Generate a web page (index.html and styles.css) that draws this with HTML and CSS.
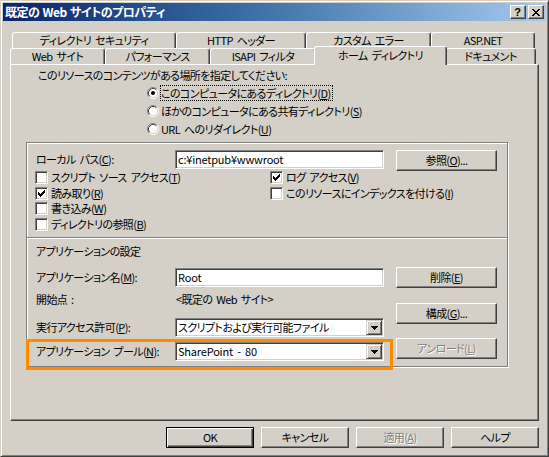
FILE: index.html
```html
<!DOCTYPE html>
<html lang="ja">
<head>
<meta charset="utf-8">
<title>既定の Web サイトのプロパティ</title>
<link rel="stylesheet" href="styles.css">
</head>
<body>
<div class="window">
  <div class="titlebar">
    <span class="title">既定の Web サイトのプロパティ</span>
    <div class="tbtns">
      <span class="tbtn help">?</span>
      <span class="tbtn close"><svg width="8" height="7" viewBox="0 0 8 7" shape-rendering="crispEdges"><path d="M0 0h2v1h-2z M6 0h2v1h-2z M1 1h2v1h-2z M5 1h2v1h-2z M2 2h4v1h-4z M3 3h2v1h-2z M2 4h4v1h-4z M1 5h2v1h-2z M5 5h2v1h-2z M0 6h2v1h-2z M6 6h2v1h-2z" fill="#000"/></svg></span>
    </div>
  </div>

  <div class="tabs">
    <div class="tabrow back">
      <div class="tab t-sec">ディレクトリ セキュリティ</div>
      <div class="tab t-http">HTTP ヘッダー</div>
      <div class="tab t-err">カスタム エラー</div>
      <div class="tab t-asp">ASP.NET</div>
    </div>
    <div class="tabrow front">
      <div class="tab t-web">Web サイト</div>
      <div class="tab t-perf">パフォーマンス</div>
      <div class="tab t-isapi">ISAPI フィルタ</div>
      <div class="tab t-home sel">ホーム ディレクトリ</div>
      <div class="tab t-doc">ドキュメント</div>
    </div>
  </div>

  <div class="panel">
    <div class="prompt">このリソースのコンテンツがある場所を指定してください:</div>
    <div class="radios">
      <div class="radio">
        <svg class="rb" width="12" height="12" viewBox="0 0 12 12"><circle cx="6" cy="6" r="5" fill="#fff"/><path d="M2.11 9.89A5.5 5.5 0 0 1 9.89 2.11" fill="none" stroke="#808080"/><path d="M9.89 2.11A5.5 5.5 0 0 1 2.11 9.89" fill="none" stroke="#fff"/><path d="M2.82 9.18A4.5 4.5 0 0 1 9.18 2.82" fill="none" stroke="#404040"/><path d="M9.18 2.82A4.5 4.5 0 0 1 2.82 9.18" fill="none" stroke="#d4d0c8"/><circle cx="6" cy="6" r="2" fill="#000"/></svg>
        <span class="rl focus">このコンピュータにあるディレクトリ(<u>D</u>)</span>
      </div>
      <div class="radio">
        <svg class="rb" width="12" height="12" viewBox="0 0 12 12"><circle cx="6" cy="6" r="5" fill="#fff"/><path d="M2.11 9.89A5.5 5.5 0 0 1 9.89 2.11" fill="none" stroke="#808080"/><path d="M9.89 2.11A5.5 5.5 0 0 1 2.11 9.89" fill="none" stroke="#fff"/><path d="M2.82 9.18A4.5 4.5 0 0 1 9.18 2.82" fill="none" stroke="#404040"/><path d="M9.18 2.82A4.5 4.5 0 0 1 2.82 9.18" fill="none" stroke="#d4d0c8"/></svg>
        <span class="rl">ほかのコンピュータにある共有ディレクトリ(<u>S</u>)</span>
      </div>
      <div class="radio">
        <svg class="rb" width="12" height="12" viewBox="0 0 12 12"><circle cx="6" cy="6" r="5" fill="#fff"/><path d="M2.11 9.89A5.5 5.5 0 0 1 9.89 2.11" fill="none" stroke="#808080"/><path d="M9.89 2.11A5.5 5.5 0 0 1 2.11 9.89" fill="none" stroke="#fff"/><path d="M2.82 9.18A4.5 4.5 0 0 1 9.18 2.82" fill="none" stroke="#404040"/><path d="M9.18 2.82A4.5 4.5 0 0 1 2.82 9.18" fill="none" stroke="#d4d0c8"/></svg>
        <span class="rl">URL へのリダイレクト(<u>U</u>)</span>
      </div>
    </div>

    <div class="group">
      <div class="row path">
        <span class="lbl">ローカル パス(<u>C</u>):</span>
        <div class="field">c:¥inetpub¥wwwroot</div>
        <div class="btn">参照(<u>O</u>)...</div>
      </div>

      <div class="checks">
        <div class="ccol first">
          <div class="check"><span class="cb"></span><span>スクリプト ソース アクセス(<u>T</u>)</span></div>
          <div class="check"><span class="cb"><svg width="13" height="13" viewBox="0 0 13 13" shape-rendering="crispEdges"><path d="M3 5h1v3h-1z M4 6h1v3h-1z M5 7h1v3h-1z M6 6h1v3h-1z M7 5h1v3h-1z M8 4h1v3h-1z M9 3h1v3h-1z" fill="#000"/></svg></span><span>読み取り(<u>R</u>)</span></div>
          <div class="check"><span class="cb"></span><span>書き込み(<u>W</u>)</span></div>
          <div class="check"><span class="cb"></span><span>ディレクトリの参照(<u>B</u>)</span></div>
        </div>
        <div class="ccol">
          <div class="check"><span class="cb"><svg width="13" height="13" viewBox="0 0 13 13" shape-rendering="crispEdges"><path d="M3 5h1v3h-1z M4 6h1v3h-1z M5 7h1v3h-1z M6 6h1v3h-1z M7 5h1v3h-1z M8 4h1v3h-1z M9 3h1v3h-1z" fill="#000"/></svg></span><span>ログ アクセス(<u>V</u>)</span></div>
          <div class="check"><span class="cb"></span><span>このリソースにインデックスを付ける(<u>I</u>)</span></div>
        </div>
      </div>

      <div class="sep"></div>
      <div class="apphead">アプリケーションの設定</div>

      <div class="app">
        <div class="appleft">
          <div class="arow r1">
            <span class="lbl">アプリケーション名(<u>M</u>):</span>
            <div class="field">Root</div>
          </div>
          <div class="arow r2">
            <span class="lbl">開始点 :</span>
            <span class="static">&lt;既定の Web サイト&gt;</span>
          </div>
          <div class="arow r3">
            <span class="lbl">実行アクセス許可(<u>P</u>):</span>
            <div class="field select"><span class="val">スクリプトおよび実行可能ファイル</span><span class="arrow"><svg width="7" height="4" viewBox="0 0 7 4" shape-rendering="crispEdges"><path d="M0 0h7v1h-1v1h-1v1h-1v1h-1v-1h-1v-1h-1v-1h-1z" fill="#000"/></svg></span></div>
          </div>
          <div class="arow r4 hl">
            <span class="lbl">アプリケーション プール(<u>N</u>):</span>
            <div class="field select"><span class="val">SharePoint - 80</span><span class="arrow"><svg width="7" height="4" viewBox="0 0 7 4" shape-rendering="crispEdges"><path d="M0 0h7v1h-1v1h-1v1h-1v1h-1v-1h-1v-1h-1v-1h-1z" fill="#000"/></svg></span></div>
          </div>
        </div>
        <div class="appright">
          <div class="btn b-del">削除(<u>E</u>)</div>
          <div class="btn b-cfg">構成(<u>G</u>)...</div>
          <div class="btn b-unl disabled">アンロード(<u>L</u>)</div>
        </div>
      </div>
    </div>
  </div>

  <div class="buttons">
    <div class="btn dlg default">OK</div>
    <div class="btn dlg">キャンセル</div>
    <div class="btn dlg disabled">適用(<u>A</u>)</div>
    <div class="btn dlg">ヘルプ</div>
  </div>
</div>
</body>
</html>
```

FILE: styles.css
```css
* { box-sizing: border-box; }
html, body { margin: 0; padding: 0; }
body {
  width: 549px;
  height: 457px;
  overflow: hidden;
  background: #d4d0c8;
  font: 11px/15px "Noto Sans CJK JP", "Noto Sans CJK SC", sans-serif;
  letter-spacing: -0.6px;
  word-spacing: 2px;
  font-feature-settings: "palt";
  color: #000;
}
u { text-decoration: underline; text-underline-offset: 1px; }

.window {
  width: 549px;
  height: 457px;
  background: #d4d0c8;
  border: 1px solid;
  border-color: #d4d0c8 #404040 #404040 #d4d0c8;
  box-shadow: inset 1px 1px #fff, inset -1px -1px #808080;
  padding: 2px;
  display: flex;
  flex-direction: column;
}

/* title bar */
.titlebar {
  height: 18px;
  flex: none;
  background: linear-gradient(90deg, #0a246a 0%, #3a6ea5 45%, #a6caf0 100%);
  display: flex;
  align-items: center;
  padding: 0 2px 0 2px;
}
.title {
  color: #fff;
  font-weight: bold;
  font-size: 12px;
  letter-spacing: -0.5px;
  word-spacing: 1px;
  line-height: 18px;
  white-space: nowrap;
}
.tbtns { margin-left: auto; display: flex; gap: 2px; }
.tbtn {
  width: 16px;
  height: 14px;
  background: #d4d0c8;
  border: 1px solid;
  border-color: #fff #404040 #404040 #fff;
  box-shadow: inset -1px -1px #808080;
  display: flex;
  align-items: center;
  justify-content: center;
}
.tbtn.help {
  font: bold 11px/12px "Liberation Sans", sans-serif;
  letter-spacing: 0;
  padding-right: 1px;
}
.tbtn.close svg { display: block; margin-right: 1px; }

/* tabs */
.tabs { margin-top: 11px; flex: none; }
.tabrow { display: flex; height: 16px; }
.tabrow.back { margin-left: 9px; }
.tabrow.front { margin-left: 7px; }
.tab {
  flex: none;
  height: 16px;
  border: 1px solid;
  border-bottom: none;
  border-color: #fff #404040 #404040 #fff;
  border-radius: 3px 3px 0 0;
  box-shadow: inset -1px 0 #808080;
  background: #d4d0c8;
  text-align: center;
  line-height: 15px;
  white-space: nowrap;
}
.tabrow.back .tab { line-height: 14px; }
.t-sec { width: 164px; }
.t-http { width: 130px; }
.t-err { width: 125px; }
.t-asp { width: 104px; }
.t-web { width: 95px; }
.t-perf { width: 105px; }
.t-isapi { width: 106px; }
.t-home { width: 133px; }
.t-doc { width: 91px; }
.tab.sel {
  height: 19px;
  margin: -2px -2px 0;
  line-height: 16px;
  position: relative;
  z-index: 1;
}

/* panel */
.panel {
  flex: none;
  margin-left: 7px;
  width: 529px;
  height: 357px;
  border: 1px solid;
  border-color: #fff #404040 #404040 #fff;
  box-shadow: inset -1px -1px #808080;
  padding-top: 3px;
}
.prompt { padding-left: 27px; line-height: 15px; white-space: nowrap; }

.radios { margin: 1px 0 0 136px; }
.radio { display: flex; align-items: center; height: 18px; }
.rb { display: block; flex: none; margin-right: 1px; }
.rl { border: 1px dotted transparent; line-height: 14px; padding: 0 1px 0 0; white-space: nowrap; }
.rl.focus { border-color: #000; }

.group {
  margin: 4px 0 0 15px;
  width: 482px;
  height: 225px;
  border: 1px solid #808080;
  box-shadow: inset 1px 1px #fff, 1px 1px #fff;
  padding: 7px 0 0 9px;
}

.row { display: flex; align-items: flex-start; }
.lbl { width: 139px; flex: none; white-space: nowrap; }
.path .lbl { line-height: 18px; }

.field {
  width: 209px;
  height: 19px;
  flex: none;
  background: #fff;
  border: 1px solid;
  border-color: #808080 #fff #fff #808080;
  box-shadow: inset 1px 1px #404040, inset -1px -1px #d4d0c8;
  padding: 0 2px;
  line-height: 17px;
  letter-spacing: -0.2px;
  white-space: nowrap;
  overflow: hidden;
}
.field.select { display: flex; padding-right: 0; }
.field.select .val { flex: 1; }
.r3 .field .val { letter-spacing: -0.6px; }
.arrow {
  flex: none;
  width: 16px;
  height: 15px;
  margin: 1px 1px 1px 0;
  background: #d4d0c8;
  border: 1px solid;
  border-color: #d4d0c8 #404040 #404040 #d4d0c8;
  box-shadow: inset 1px 1px #fff, inset -1px -1px #808080;
  display: flex;
  align-items: center;
  justify-content: center;
}
.arrow svg { display: block; margin-left: 1px; }

.btn {
  flex: none;
  width: 101px;
  height: 21px;
  background: #d4d0c8;
  border: 1px solid;
  border-color: #fff #404040 #404040 #fff;
  box-shadow: inset -1px -1px #808080;
  display: flex;
  align-items: center;
  justify-content: center;
  line-height: 15px;
  white-space: nowrap;
}
.path .btn { margin-left: 12px; }
.btn.disabled { color: #808080; text-shadow: 1px 1px 0 #fff; }

/* checkboxes */
.checks { display: flex; margin: -1px 0 0 -1px; }
.ccol.first { width: 235px; }
.check { display: flex; align-items: center; height: 15.5px; white-space: nowrap; }
.cb {
  flex: none;
  width: 13px;
  height: 13px;
  margin-right: 3px;
  background: #fff;
  border: 1px solid;
  border-color: #808080 #fff #fff #808080;
  box-shadow: inset 1px 1px #404040, inset -1px -1px #d4d0c8;
}
.cb svg { display: block; margin: -1px; }

.sep {
  margin: 5px 0 0 -9px;
  width: 480px;
  height: 2px;
  border-top: 1px solid #808080;
  border-bottom: 1px solid #fff;
}
.apphead { margin-top: 4.5px; line-height: 15px; }

.app { display: flex; margin-top: 8.5px; }
.appleft { width: 348px; flex: none; padding-top: 1px; }
.arow { display: flex; align-items: center; height: 19px; }
.arow.r2 { margin-top: 2.5px; }
.arow.r3 { margin-top: 9.5px; }
.arow.r4 { margin-top: 5px; }
.static { padding-left: 1px; white-space: nowrap; }
.hl { position: relative; }
.hl::after {
  content: "";
  position: absolute;
  left: -10px;
  top: -3px;
  width: 361px;
  height: 25px;
  border: 3px solid #ff8a00;
  pointer-events: none;
}
.appright { margin-left: 12px; display: flex; flex-direction: column; }
.b-cfg { margin-top: 15px; }
.b-unl { margin-top: 14px; }

/* dialog buttons */
.buttons {
  display: flex;
  justify-content: flex-end;
  gap: 7px;
  margin-top: 6px;
  padding-right: 7px;
}
.btn.dlg { width: 88px; }
.btn.default {
  border: 1px solid #000;
  box-shadow: inset 1px 1px #fff, inset -1px -1px #404040, inset -2px -2px #808080;
}
```
